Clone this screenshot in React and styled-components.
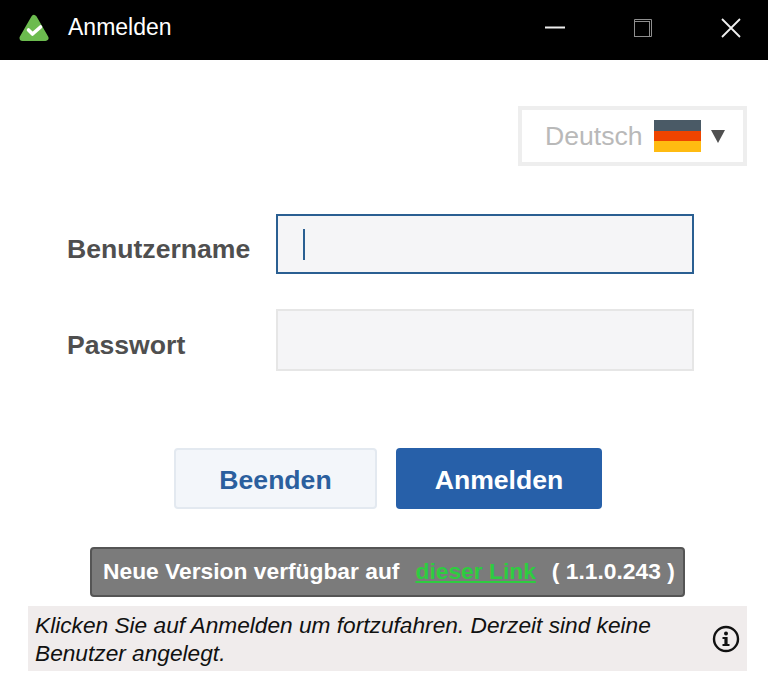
import React from "react";
import styled, { createGlobalStyle } from "styled-components";

const Global = createGlobalStyle`
  html, body { margin: 0; padding: 0; background: #fff; }
  body { font-family: "Liberation Sans", Arial, sans-serif; }
  * { box-sizing: border-box; }
`;

const Page = styled.div`
  width: 768px;
  height: 677px;
  display: flex;
  flex-direction: column;
  overflow: hidden;
`;

const TitleBar = styled.div`
  height: 60px;
  background: #000;
  color: #fff;
  display: flex;
  align-items: center;
  padding-left: 19px;
  flex-shrink: 0;
`;

const LogoWrap = styled.span`
  display: flex;
  margin-bottom: 5px;
`;

const Title = styled.span`
  font-size: 23px;
  margin-left: 19px;
  margin-bottom: 6px;
  flex: 1;
`;

const WinButtons = styled.div`
  display: flex;
  align-items: center;
  margin-bottom: 4px;
  padding-right: 27px;
  gap: 68px;
`;

const LangRow = styled.div`
  display: flex;
  justify-content: flex-end;
  padding: 46px 21px 0 0;
`;

const LangSelect = styled.div`
  width: 229px;
  height: 60px;
  border: 4px solid #eeeeee;
  display: flex;
  align-items: center;
  padding-left: 23px;
`;

const LangName = styled.span`
  font-size: 26.6px;
  color: #b9b9b9;
  margin-right: 11px;
`;

const Arrow = styled.span`
  width: 0;
  height: 0;
  margin-left: 10px;
  border-left: 7.5px solid transparent;
  border-right: 7.5px solid transparent;
  border-top: 13px solid #505050;
`;

const Form = styled.div`
  display: flex;
  flex-direction: column;
  gap: 35px;
  padding: 48px 0 0 67px;
`;

const Row = styled.div`
  display: flex;
  align-items: center;
`;

const Label = styled.label`
  width: 209px;
  padding-top: 11px;
  font-size: 26.6px;
  font-weight: bold;
  color: #4f4f4f;
`;

const Field = styled.div`
  width: 418px;
  height: ${p => (p.$focused ? 60 : 62)}px;
  background: #f5f5f7;
  border: ${p => (p.$focused ? "2px solid #2a5f92" : "2px solid #e6e6e6")};
  display: flex;
  align-items: center;
  padding-left: 25px;
`;

const Caret = styled.span`
  width: 2px;
  height: 31px;
  background: #2a5f92;
`;

const Buttons = styled.div`
  display: flex;
  justify-content: center;
  gap: 19px;
  padding: 77px 0 0 8px;
`;

const Button = styled.button`
  width: ${p => (p.$primary ? 206 : 203)}px;
  height: 61px;
  border-radius: 4px;
  border: ${p => (p.$primary ? "none" : "2px solid #e3e9f0")};
  background: ${p => (p.$primary ? "#2760a9" : "#f3f6fa")};
  color: ${p => (p.$primary ? "#fff" : "#2b5f9e")};
  font-family: inherit;
  font-size: 26.6px;
  font-weight: bold;
  padding: 3px 0 0;
`;

const VersionBar = styled.div`
  align-self: flex-start;
  margin: 38px 0 0 90px;
  width: 595px;
  height: 50px;
  background: #7b7b7b;
  border: 2px solid #555;
  border-radius: 4px;
  color: #fff;
  font-size: 22.8px;
  font-weight: bold;
  display: flex;
  align-items: center;
  padding: 0 0 2px 11px;
  white-space: pre;
`;

const VersionLink = styled.a`
  color: #2ecc40;
  text-decoration: underline;
  margin: 0 16px;
`;

const InfoBox = styled.div`
  margin: 9px 21px 0 28px;
  height: 65px;
  background: #f0ecec;
  display: flex;
  align-items: center;
  justify-content: space-between;
  padding: 0 7px 0 7px;
`;

const InfoText = styled.div`
  width: 650px;
  font-size: 22.7px;
  font-style: italic;
  line-height: 28px;
  color: #111;
`;

const Logo = () => (
  <svg width="30" height="28" viewBox="0 0 30 28">
    <path d="M15 4 L26.5 24 L3.5 24 Z" fill="#6cbb4f" stroke="#6cbb4f" strokeWidth="6" strokeLinejoin="round" />
    <path d="M9.5 16 L13.5 20 L21.5 13" fill="none" stroke="#fff" strokeWidth="3.6" strokeLinecap="round" strokeLinejoin="round" />
  </svg>
);

const Minimize = () => (
  <svg width="20" height="20" viewBox="0 0 20 20">
    <path d="M0 9.5 H20" stroke="#eee" strokeWidth="2" />
  </svg>
);

const Restore = () => (
  <svg width="20" height="20" viewBox="0 0 20 20" fill="none" stroke="#8f8f8f" strokeWidth="1">
    <rect x="1.5" y="3.5" width="15" height="15" />
    <path d="M1.5 3.5 V1.5 H18.5 V18.5 H16.5" />
  </svg>
);

const Close = () => (
  <svg width="20" height="20" viewBox="0 0 20 20">
    <path d="M1 1 L19 19 M19 1 L1 19" stroke="#f0f0f0" strokeWidth="1.8" />
  </svg>
);

const Flag = () => (
  <svg width="47" height="32" viewBox="0 0 47 32">
    <rect width="47" height="11" fill="#4a5a66" />
    <rect y="11" width="47" height="10" fill="#ee4400" />
    <rect y="21" width="47" height="11" fill="#ffbb11" />
  </svg>
);

const InfoIcon = () => (
  <svg width="28" height="28" viewBox="0 0 28 28">
    <circle cx="14" cy="14" r="12" fill="none" stroke="#111" strokeWidth="2.4" />
    <circle cx="14" cy="8.5" r="2" fill="#111" />
    <path d="M10.5 12 H15.6 V19 H17.5 V21 H10.5 V19 H12.4 V14 H10.5 Z" fill="#111" />
  </svg>
);

export default function App() {
  return (
    <Page>
      <Global />
      <TitleBar>
        <LogoWrap>
          <Logo />
        </LogoWrap>
        <Title>Anmelden</Title>
        <WinButtons>
          <Minimize />
          <Restore />
          <Close />
        </WinButtons>
      </TitleBar>
      <LangRow>
        <LangSelect>
          <LangName>Deutsch</LangName>
          <Flag />
          <Arrow />
        </LangSelect>
      </LangRow>
      <Form>
        <Row>
          <Label>Benutzername</Label>
          <Field $focused>
            <Caret />
          </Field>
        </Row>
        <Row>
          <Label>Passwort</Label>
          <Field />
        </Row>
      </Form>
      <Buttons>
        <Button>Beenden</Button>
        <Button $primary>Anmelden</Button>
      </Buttons>
      <VersionBar>
        Neue Version verfügbar auf
        <VersionLink>dieser Link</VersionLink>
        ( 1.1.0.243 )
      </VersionBar>
      <InfoBox>
        <InfoText>Klicken Sie auf Anmelden um fortzufahren. Derzeit sind keine Benutzer angelegt.</InfoText>
        <InfoIcon />
      </InfoBox>
    </Page>
  );
}
